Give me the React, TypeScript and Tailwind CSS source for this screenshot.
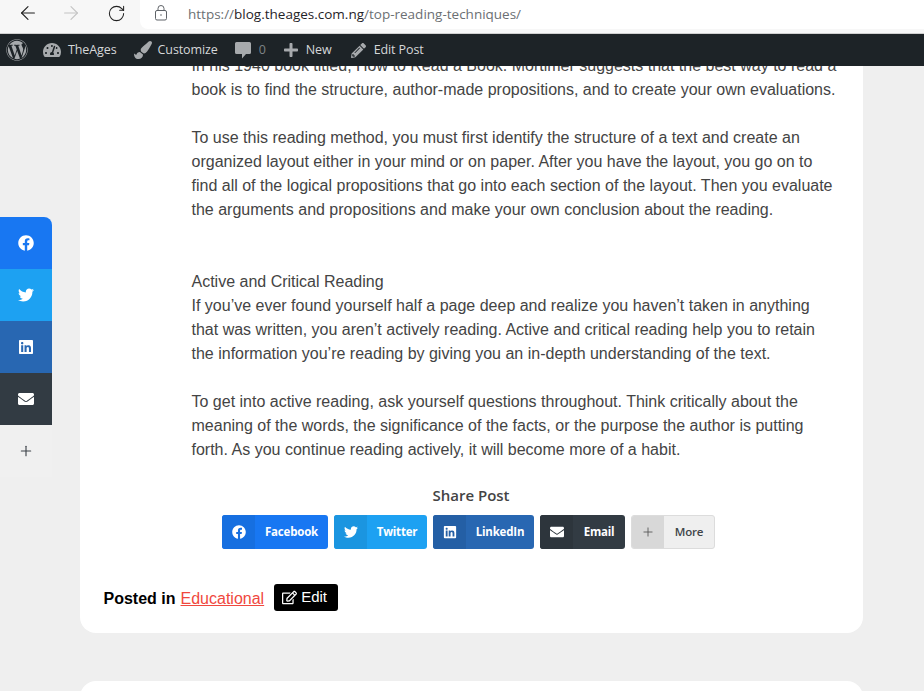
import { ArrowLeft, ArrowRight, Plus, RotateCw } from 'lucide-react'
import type { ReactNode } from 'react'
import {
  FaEnvelope,
  FaFacebook,
  FaLinkedin,
  FaPaintBrush,
  FaPencilAlt,
  FaPlus,
  FaRegEdit,
  FaTachometerAlt,
  FaTwitter,
  FaWordpress,
} from 'react-icons/fa'

const shareButtons = [
  { label: 'Facebook', icon: <FaFacebook />, width: 'w-[106px]', main: 'bg-[#1877f2]', dark: 'bg-[#166fe0]' },
  { label: 'Twitter', icon: <FaTwitter />, width: 'w-[93px]', main: 'bg-[#1da1f2]', dark: 'bg-[#1b95e0]' },
  { label: 'LinkedIn', icon: <FaLinkedin />, width: 'w-[101px]', main: 'bg-[#2867b2]', dark: 'bg-[#245fa5]' },
  { label: 'Email', icon: <FaEnvelope />, width: 'w-[85px]', main: 'bg-[#323b43]', dark: 'bg-[#2d353c]' },
]

function AdminItem({ icon, label, gap }: { icon: ReactNode; label: string; gap: string }) {
  return (
    <div className={`flex items-center ${gap}`}>
      <span className="text-[#a7aaad]">{icon}</span>
      <span>{label}</span>
    </div>
  )
}

function LockIcon() {
  return (
    <svg width="12" height="16" viewBox="0 0 12 16" fill="none" stroke="#5f6368" strokeWidth="1" className="-mt-[4px] -ml-[1px]">
      <rect x="0.5" y="5.5" width="11" height="9.5" rx="1.5" />
      <path d="M3 5.5V3.5a3 3 0 0 1 6 0v2" />
      <circle cx="6" cy="10" r="0.8" fill="#5f6368" stroke="none" />
    </svg>
  )
}

function CommentIcon() {
  return (
    <svg width="16" height="18" viewBox="0 0 16 18" fill="#a7aaad">
      <path d="M1.5 1h13A1.5 1.5 0 0 1 16 2.500v9a1.500 1.500 0 0 1-1.500 1.500H11l-4 4.500V13H1.500A1.500 1.500 0 0 1 0 11.500v-9A1.500 1.500 0 0 1 1.500 1z" />
    </svg>
  )
}

export default function App() {
  return (
    <div className="h-[691px] w-[924px] overflow-hidden relative flex flex-col bg-[#efefef]">
      {/* browser toolbar */}
      <div className="h-[34px] bg-[#f7f7f7] flex items-start shrink-0 border-b border-[#d0d0d0]">
        <ArrowLeft size={22} strokeWidth={1.2} className="ml-[17px] mt-[2px] text-[#202020]" />
        <ArrowRight size={22} strokeWidth={1.2} className="ml-[21px] mt-[2px] text-[#c4c4c4]" />
        <RotateCw size={19} strokeWidth={1.3} className="ml-[25px] mt-[4px] text-[#202020]" />
        <div className="ml-[14px] flex-1 h-[29px] bg-white rounded-bl-[8px] flex items-center pl-[16px] font-['Open_Sans',sans-serif] text-[13.5px]">
          <LockIcon />
          <span className="ml-[21px] text-[#6b6f73]">
            https://<span className="text-[#1f2328]">blog.theages.com.ng</span>/top-reading-techniques/
          </span>
        </div>
      </div>

      {/* wp admin bar */}
      <div className="h-[32px] bg-[#1d2327] shrink-0 flex items-center pl-[6px] font-['Open_Sans',sans-serif] text-[12.5px] tracking-[-0.1px] text-[#d5d7d9]">
        <FaWordpress className="text-[#a7aaad] text-[22px]" />
        <div className="ml-[15px] flex items-center gap-[17px]">
          <AdminItem icon={<FaTachometerAlt className="text-[18px]" />} label="TheAges" gap="gap-[7px]" />
          <AdminItem icon={<FaPaintBrush className="text-[18px]" />} label="Customize" gap="gap-[6px]" />
          <div className="flex items-center gap-[8px]">
            <CommentIcon />
            <span className="text-[#7f8387]">0</span>
          </div>
          <AdminItem icon={<FaPlus className="text-[16px]" />} label="New" gap="gap-[7px]" />
          <div className="ml-[2px]">
            <AdminItem icon={<FaPencilAlt className="text-[15px]" />} label="Edit Post" gap="gap-[8px]" />
          </div>
        </div>
      </div>

      {/* page */}
      <div className="flex-1 overflow-hidden">
        <article className="ml-[80px] w-[783px] -mt-[12px] bg-white rounded-b-[16px] pb-[22px]">
          <div className="pl-[111.5px] pr-[26px] font-['Liberation_Sans',sans-serif] text-[16px] leading-[24px] text-[#444444]">
            <p>
              In his 1940 book titled, How to Read a Book. Mortimer suggests that the best way to read a book is to find
              the structure, author-made propositions, and to create your own evaluations.
            </p>
            <p className="mt-[24px]">
              To use this reading method, you must first identify the structure of a text and create an organized layout
              either in your mind or on paper. After you have the layout, you go on to find all of the logical
              propositions that go into each section of the layout. Then you evaluate the arguments and propositions and
              make your own conclusion about the reading.
            </p>
            <p className="mt-[48px]">
              Active and Critical Reading
              <br />
              If you’ve ever found yourself half a page deep and realize you haven’t taken in anything that was written,
              you aren’t actively reading. Active and critical reading help you to retain the information you’re reading
              by giving you an in-depth understanding of the text.
            </p>
            <p className="mt-[24px]">
              To get into active reading, ask yourself questions throughout. Think critically about the meaning of the
              words, the significance of the facts, or the purpose the author is putting forth. As you continue reading
              actively, it will become more of a habit.
            </p>
          </div>

          {/* share */}
          <div className="mt-[21px] pr-[1px] text-center font-['Open_Sans',sans-serif] font-semibold text-[15px] leading-[24px] text-[#444444]">
            Share Post
          </div>
          <div className="mt-[8px] pl-[142px] flex gap-[6px] font-['Open_Sans',sans-serif] text-[11.5px] font-bold tracking-[-0.2px]">
            {shareButtons.map(b => (
              <div key={b.label} className={`${b.width} ${b.main} h-[34px] rounded-[3px] overflow-hidden flex text-white`}>
                <span className={`${b.dark} w-[33px] flex items-center justify-center text-[14px]`}>{b.icon}</span>
                <span className="flex-1 flex items-center justify-center">{b.label}</span>
              </div>
            ))}
            <div className="w-[84px] h-[34px] rounded-[3px] overflow-hidden flex border border-[#dcdcdc] bg-[#efefef] text-[#3f4549] font-semibold">
              <span className="bg-[#d8d8d8] w-[32px] flex items-center justify-center text-[#555]">
                <Plus size={14} strokeWidth={1.5} />
              </span>
              <span className="flex-1 flex items-center justify-center">More</span>
            </div>
          </div>

          {/* post meta */}
          <div className="mt-[35px] pl-[23.5px] flex items-center font-['Liberation_Sans',sans-serif] text-[16px] text-black">
            <span className="font-bold mt-[2px]">Posted in</span>
            <a href="#" className="ml-[5px] mt-[2px] text-[#f0483e] underline">
              Educational
            </a>
            <span className="ml-[10px] w-[64px] h-[27px] bg-black text-white rounded-[3px] flex items-center pl-[8px] gap-[4px] text-[15px]">
              <FaRegEdit />
              Edit
            </span>
          </div>
        </article>

        <div className="ml-[80px] w-[783px] mt-[48px] h-[60px] bg-white rounded-t-[16px]" />
      </div>

      {/* floating share sidebar */}
      <div className="absolute left-0 top-[217px] w-[52px] rounded-tr-[8px] overflow-hidden text-white text-[16px]">
        <div className="h-[52px] bg-[#1877f2] flex items-center justify-center"><FaFacebook /></div>
        <div className="h-[52px] bg-[#1da1f2] flex items-center justify-center"><FaTwitter /></div>
        <div className="h-[52px] bg-[#2867b2] flex items-center justify-center"><FaLinkedin /></div>
        <div className="h-[52px] bg-[#323b43] flex items-center justify-center"><FaEnvelope /></div>
        <div className="h-[52px] bg-[#f0f0f0] flex items-center justify-center text-[#3c4248]">
          <Plus size={16} strokeWidth={1.7} />
        </div>
      </div>
    </div>
  )
}
